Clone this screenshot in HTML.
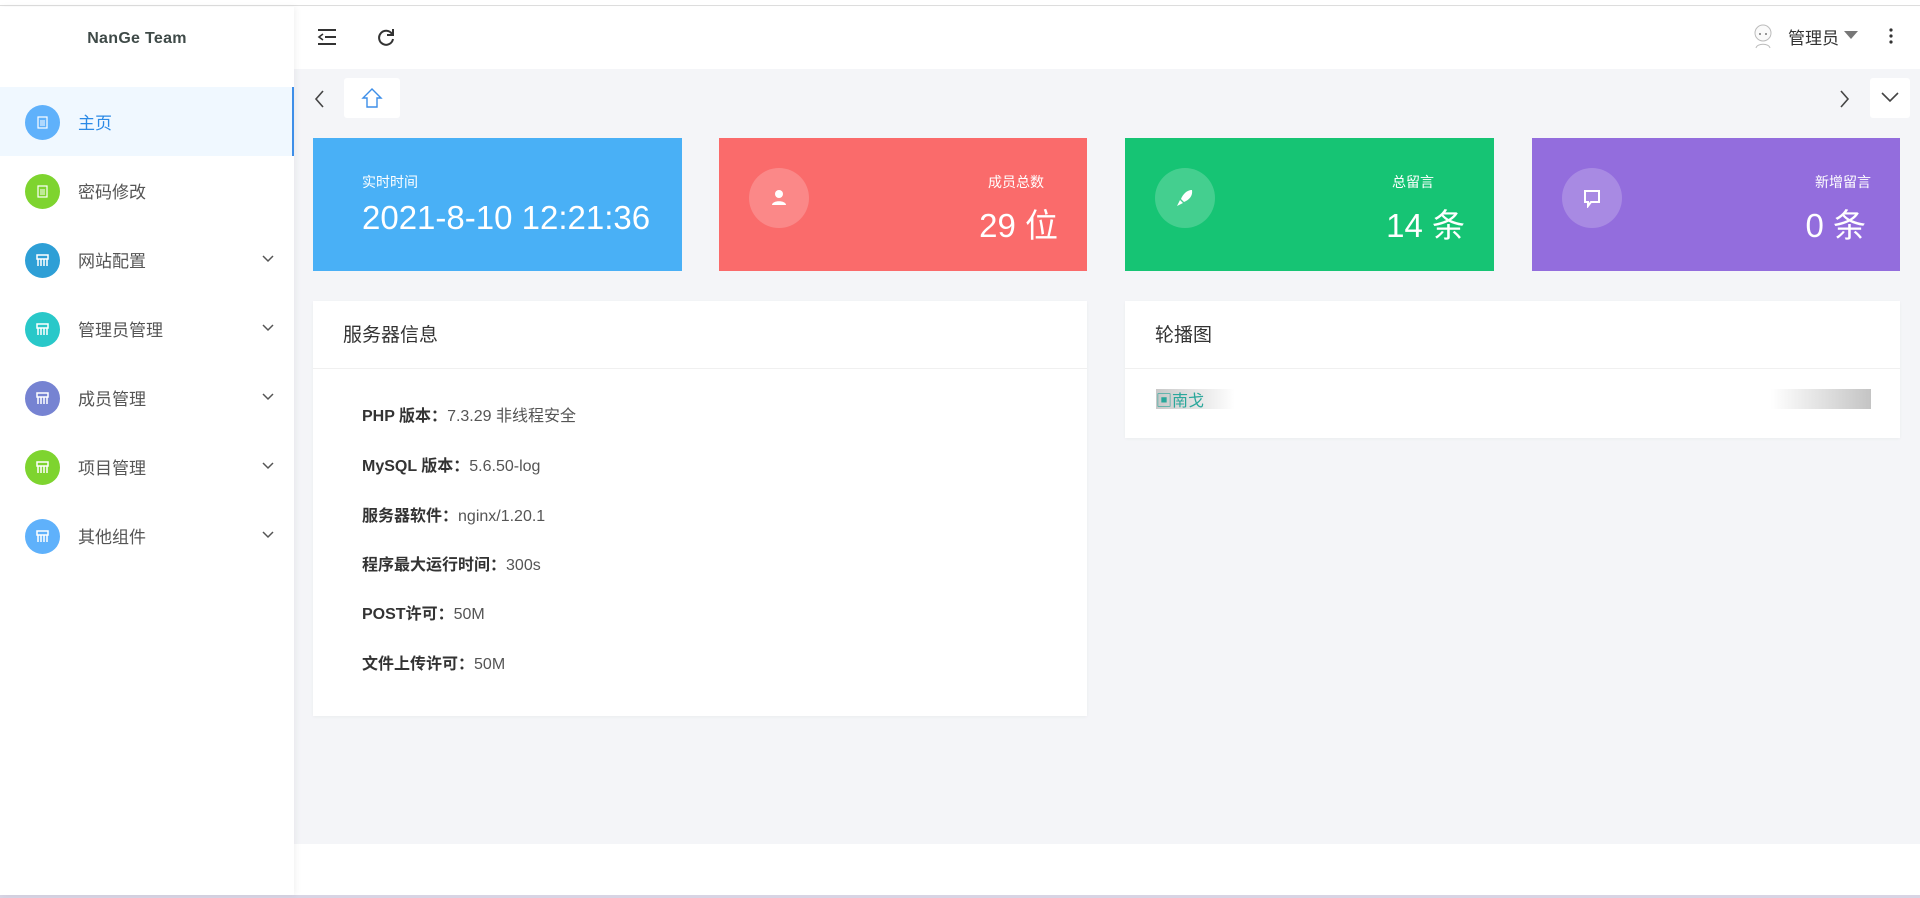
<!DOCTYPE html>
<html><head><meta charset="utf-8"><style>
*{margin:0;padding:0;box-sizing:border-box}
body{width:1920px;height:898px;overflow:hidden;background:#fff;font-family:"Liberation Sans","Noto Sans CJK SC",sans-serif;position:relative;color:#333}
.a{position:absolute}
.top{left:0;top:0;width:1920px;height:6px;background:#fff;border-bottom:1px solid #ddd}
.side{left:0;top:7px;width:294px;height:888px;background:#fff;box-shadow:2px 0 6px rgba(0,0,0,.05);z-index:2}
.logo{left:0;top:23px;width:274px;text-align:center;font-size:16px;font-weight:bold;color:#3f4a48;letter-spacing:.3px}
.item{left:0;width:294px;height:69px}
.item .ic{position:absolute;left:25px;top:18px;width:35px;height:35px;border-radius:50%}
.item .ic svg{position:absolute;left:11px;top:11px}
.item .t{position:absolute;left:78px;top:2px;line-height:69px;font-size:17px;color:#555}
.item .ch{position:absolute;left:262px;top:30px}
.act{background:#f0f8ff;border-right:2px solid #3d8ee8}
.act .t{color:#2b8ae6}
.hdr{left:294px;top:7px;width:1626px;height:62px;background:#fff;box-shadow:0 2px 4px rgba(0,0,0,.05)}
.main{left:294px;top:69px;width:1626px;height:775px;background:#f4f5f8}
.card{top:138px;height:133px;color:#fff}
.card .lb{position:absolute;top:34px;font-size:14px}
.card .num{position:absolute;top:61px;font-size:33px}
.card .ci{position:absolute;left:30px;top:30px;width:60px;height:60px;border-radius:50%;background:rgba(255,255,255,.2)}
.card .ci svg{position:absolute;left:20px;top:20px}
.panel{background:#fff;box-shadow:0 1px 3px rgba(0,0,0,.04)}
.ph{height:68px;border-bottom:1px solid #f0f0f0;line-height:70px;padding-left:30px;font-size:19px;color:#333}
.row{position:absolute;left:49px;font-size:16px;color:#555}
.row b{color:#333}
</style></head><body>
<div class="a top"></div>
<div class="a side">
 <div class="a logo">NanGe Team</div>
 <div class="a item act" style="top:80px"><div class="ic" style="background:#5fb1fb"><svg width="13" height="13" viewBox="0 0 13 13"><rect x="2" y="1" width="9" height="11" fill="none" stroke="#fff" stroke-width="1.2"/><path d="M4 5h5M4 7h5M4 9h5" stroke="#fff"/></svg></div><div class="t">主页</div></div>
 <div class="a item" style="top:149px"><div class="ic" style="background:#7ed42f"><svg width="13" height="13" viewBox="0 0 13 13"><rect x="2" y="1" width="9" height="11" fill="none" stroke="#fff" stroke-width="1.2"/><path d="M4 5h5M4 7h5M4 9h5" stroke="#fff"/></svg></div><div class="t">密码修改</div></div>
 <div class="a item" style="top:218px"><div class="ic" style="background:#2e9fd6"><svg width="13" height="13" viewBox="0 0 13 13"><path d="M1 1h11v4H1zM2 5v7M5 5v7M8 5v7M11 5v7" fill="none" stroke="#fff" stroke-width="1.5"/></svg></div><div class="t">网站配置</div><svg class="ch" width="12" height="8" viewBox="0 0 12 8"><path d="M1 1l5 5 5-5" fill="none" stroke="#555" stroke-width="1.5"/></svg></div>
 <div class="a item" style="top:287px"><div class="ic" style="background:#29c8c9"><svg width="13" height="13" viewBox="0 0 13 13"><path d="M1 1h11v4H1zM2 5v7M5 5v7M8 5v7M11 5v7" fill="none" stroke="#fff" stroke-width="1.5"/></svg></div><div class="t">管理员管理</div><svg class="ch" width="12" height="8" viewBox="0 0 12 8"><path d="M1 1l5 5 5-5" fill="none" stroke="#555" stroke-width="1.5"/></svg></div>
 <div class="a item" style="top:356px"><div class="ic" style="background:#7683d2"><svg width="13" height="13" viewBox="0 0 13 13"><path d="M1 1h11v4H1zM2 5v7M5 5v7M8 5v7M11 5v7" fill="none" stroke="#fff" stroke-width="1.5"/></svg></div><div class="t">成员管理</div><svg class="ch" width="12" height="8" viewBox="0 0 12 8"><path d="M1 1l5 5 5-5" fill="none" stroke="#555" stroke-width="1.5"/></svg></div>
 <div class="a item" style="top:425px"><div class="ic" style="background:#7ed42f"><svg width="13" height="13" viewBox="0 0 13 13"><path d="M1 1h11v4H1zM2 5v7M5 5v7M8 5v7M11 5v7" fill="none" stroke="#fff" stroke-width="1.5"/></svg></div><div class="t">项目管理</div><svg class="ch" width="12" height="8" viewBox="0 0 12 8"><path d="M1 1l5 5 5-5" fill="none" stroke="#555" stroke-width="1.5"/></svg></div>
 <div class="a item" style="top:494px"><div class="ic" style="background:#5fb1fb"><svg width="13" height="13" viewBox="0 0 13 13"><path d="M1 1h11v4H1zM2 5v7M5 5v7M8 5v7M11 5v7" fill="none" stroke="#fff" stroke-width="1.5"/></svg></div><div class="t">其他组件</div><svg class="ch" width="12" height="8" viewBox="0 0 12 8"><path d="M1 1l5 5 5-5" fill="none" stroke="#555" stroke-width="1.5"/></svg></div>
</div>
<div class="a hdr">
 <svg class="a" style="left:23px;top:21px" width="20" height="18" viewBox="0 0 20 18"><path d="M1 2h18M8 9h11M1 16h18" stroke="#333" stroke-width="2"/><path d="M6 6l-4 3 4 3" fill="none" stroke="#333" stroke-width="1.6"/></svg>
 <svg class="a" style="left:82px;top:20px" width="20" height="20" viewBox="0 0 20 20"><path d="M16 7A7 7 0 1 0 17 12" fill="none" stroke="#333" stroke-width="2"/><path d="M17 2v6h-6" fill="none" stroke="#333" stroke-width="2"/></svg>
 <svg class="a" style="left:1458px;top:16px" width="22" height="26" viewBox="0 0 22 26"><circle cx="11" cy="10" r="8" fill="#fafafa" stroke="#bbb"/><path d="M4 25c1-5 13-5 14 0" fill="none" stroke="#bbb"/><circle cx="8" cy="11" r="1" fill="#777"/><circle cx="14" cy="11" r="1" fill="#777"/></svg>
 <div class="a" style="left:1494px;top:17px;font-size:17px;color:#333">管理员</div>
 <svg class="a" style="left:1550px;top:24px" width="14" height="9" viewBox="0 0 14 9"><path d="M0 0h14L7 8z" fill="#777"/></svg>
 <svg class="a" style="left:1594px;top:20px" width="6" height="18" viewBox="0 0 6 18"><circle cx="3" cy="3" r="1.6" fill="#333"/><circle cx="3" cy="9" r="1.6" fill="#333"/><circle cx="3" cy="15" r="1.6" fill="#333"/></svg>
</div>
<div class="a main">
 <svg class="a" style="left:20px;top:21px" width="10" height="18" viewBox="0 0 10 18"><path d="M9 1L2 9l7 8" fill="none" stroke="#444" stroke-width="1.6"/></svg>
 <div class="a" style="left:50px;top:9px;width:56px;height:40px;background:#fff;border-radius:3px"><svg class="a" style="left:17px;top:10px" width="22" height="20" viewBox="0 0 22 20"><path d="M11 1L2 10h4v9h10v-9h4z" fill="none" stroke="#3d8ee8" stroke-width="1.4"/></svg></div>
 <svg class="a" style="left:1546px;top:21px" width="10" height="18" viewBox="0 0 10 18"><path d="M1 1l7 8-7 8" fill="none" stroke="#444" stroke-width="1.6"/></svg>
 <div class="a" style="left:1576px;top:9px;width:40px;height:40px;background:#fff;border-radius:3px"><svg class="a" style="left:11px;top:14px" width="18" height="11" viewBox="0 0 18 11"><path d="M1 1l8 8 8-8" fill="none" stroke="#444" stroke-width="1.6"/></svg></div>
</div>
<div class="a card" style="left:313px;width:369px;background:#49b0f6"><div class="lb" style="left:49px">实时时间</div><div class="num" style="left:49px">2021-8-10 12:21:36</div></div>
<div class="a card" style="left:719px;width:368px;background:#fa6b6b"><div class="ci"><svg width="20" height="20" viewBox="0 0 20 20"><circle cx="10" cy="6" r="4" fill="#fff"/><path d="M3 17c0-5 14-5 14 0z" fill="#fff"/></svg></div><div class="lb" style="right:43px">成员总数</div><div class="num" style="right:29px">29 位</div></div>
<div class="a card" style="left:1125px;width:369px;background:#16c474"><div class="ci"><svg width="20" height="20" viewBox="0 0 20 20"><path d="M17 2c-5 0-9 4-11 9l3 3c5-2 9-6 8-12zM5 12l-3 6 6-3z" fill="#fff"/></svg></div><div class="lb" style="right:60px">总留言</div><div class="num" style="right:29px">14 条</div></div>
<div class="a card" style="left:1532px;width:368px;background:#936ddd"><div class="ci"><svg width="20" height="20" viewBox="0 0 20 20"><path d="M3 3h14v11H9l-3 4v-4H3z" fill="none" stroke="#fff" stroke-width="2"/></svg></div><div class="lb" style="right:29px">新增留言</div><div class="num" style="right:34px">0 条</div></div>
<div class="a panel" style="left:313px;top:301px;width:774px;height:415px">
 <div class="ph">服务器信息</div>
 <div class="row" style="top:101px"><b>PHP 版本：</b>7.3.29 非线程安全</div>
 <div class="row" style="top:151px"><b>MySQL 版本：</b>5.6.50-log</div>
 <div class="row" style="top:201px"><b>服务器软件：</b>nginx/1.20.1</div>
 <div class="row" style="top:250px"><b>程序最大运行时间：</b>300s</div>
 <div class="row" style="top:299px"><b>POST许可：</b>50M</div>
 <div class="row" style="top:349px"><b>文件上传许可：</b>50M</div>
</div>
<div class="a panel" style="left:1125px;top:301px;width:775px;height:137px">
 <div class="ph">轮播图</div>
 <div class="a" style="left:31px;top:88px;width:715px;height:20px;background:linear-gradient(90deg,#c8c8c8 0,#fff 11%,#fff 86%,#c4c4c4 100%)"></div>
 <div class="a" style="left:31px;top:86px;font-size:16px;color:#2aa79b">▣南戈</div>
</div>
<div class="a" style="left:0;top:895px;width:1920px;height:3px;background:#d8d4e4"></div>
</body></html>
